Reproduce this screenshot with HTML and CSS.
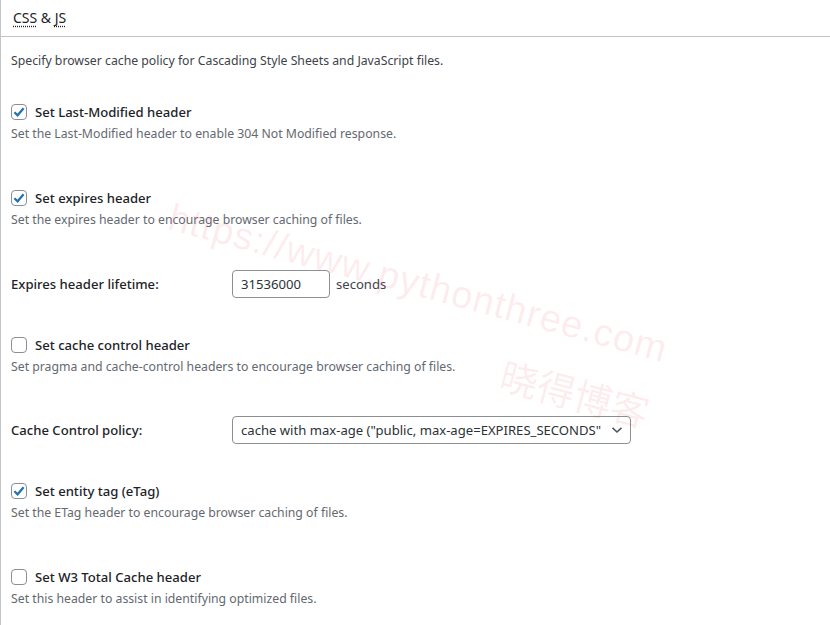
FILE: index.html
```html
<!DOCTYPE html>
<html lang="en">
<head>
  <meta charset="UTF-8">
  <title>Browser Cache - CSS &amp; JS</title>
  <link rel="stylesheet" href="styles.css">
</head>
<body>
  <div class="postbox">
    <h3 class="postbox-title"><abbr title="Cascading Style Sheet">CSS</abbr> &amp; <abbr title="JavaScript">JS</abbr></h3>
    <div class="inside">
      <p class="intro">Specify browser cache policy for Cascading Style Sheets and JavaScript files.</p>

      <div class="option first">
        <label class="check"><input type="checkbox" checked> Set Last-Modified header</label>
        <p class="desc">Set the Last-Modified header to enable 304 Not Modified response.</p>
      </div>

      <div class="option">
        <label class="check"><input type="checkbox" checked> Set expires header</label>
        <p class="desc">Set the expires header to encourage browser caching of files.</p>
      </div>

      <div class="field">
        <label class="field-label" for="lifetime">Expires header lifetime:</label>
        <input class="text" type="text" id="lifetime" value="31536000">
        <span class="unit">seconds</span>
      </div>

      <div class="option">
        <label class="check"><input type="checkbox"> Set cache control header</label>
        <p class="desc">Set pragma and cache-control headers to encourage browser caching of files.</p>
      </div>

      <div class="field second">
        <label class="field-label" for="policy">Cache Control policy:</label>
        <div class="select" id="policy">
          <span class="select-value">cache with max-age ("public, max-age=EXPIRES_SECONDS"</span>
          <svg width="12" height="8" viewBox="0 0 12 8"><path d="M1.5 1.8 L6 6 L10.5 1.8" fill="none" stroke="#50575e" stroke-width="1.6"/></svg>
        </div>
      </div>

      <div class="option">
        <label class="check"><input type="checkbox" checked> Set entity tag (eTag)</label>
        <p class="desc">Set the ETag header to encourage browser caching of files.</p>
      </div>

      <div class="option">
        <label class="check"><input type="checkbox"> Set W3 Total Cache header</label>
        <p class="desc">Set this header to assist in identifying optimized files.</p>
      </div>
    </div>

    <div class="watermark">https://www.pythonthree.com</div>
    <div class="watermark cn">晓得博客</div>
  </div>
</body>
</html>
```

FILE: styles.css
```css
body {
  margin: 0;
  background: #fff;
  font-family: "Noto Sans", sans-serif;
  color: #1d2327;
}
.postbox {
  position: relative;
  height: 625px;
  border-left: 1px solid #c3c4c7;
  overflow: hidden;
}
.postbox-title {
  margin: 0;
  padding: 8px 12px;
  font-size: 14px;
  font-weight: 400;
  line-height: 20px;
  border-bottom: 1px solid #c3c4c7;
}
abbr {
  text-decoration: underline dotted;
  text-underline-offset: 3px;
}
.inside {
  padding: 0 10px;
}
.intro {
  margin: 14px 0 0;
  font-size: 12.25px;
  line-height: 20px;
  color: #3c434a;
}
.option {
  margin-top: 44px;
}
.option.first {
  margin-top: 31px;
}
.field + .option {
  margin-top: 37px;
}
.check {
  display: flex;
  align-items: center;
  gap: 8px;
  font-size: 13.1px;
  font-weight: 500;
  line-height: 20px;
}
.check input {
  appearance: none;
  margin: 0;
  width: 16px;
  height: 16px;
  border: 1px solid #8c8f94;
  border-radius: 4px;
  background: #fff;
}
.check input:checked {
  background: #fff url("data:image/svg+xml;utf8,<svg xmlns='http://www.w3.org/2000/svg' viewBox='0 0 16 16'><path d='M3.4 8.2 L6.6 11.3 L12.6 4.2' fill='none' stroke='%232271b1' stroke-width='2.2'/></svg>") center / 16px no-repeat;
}
.desc {
  margin: 2px 0 0;
  font-size: 12.25px;
  line-height: 20px;
  color: #646970;
}
.field {
  display: flex;
  align-items: center;
  margin-top: 40px;
  font-size: 12.25px;
}
.field.second {
  margin-top: 39px;
}
.field-label {
  width: 221px;
  font-size: 13.1px;
  font-weight: 500;
}
.text {
  box-sizing: border-box;
  width: 98px;
  height: 28px;
  padding: 0 8px;
  border: 1px solid #8c8f94;
  border-radius: 4px;
  font: 13.1px "Noto Sans", sans-serif;
  color: #2c3338;
}
.unit {
  margin-left: 6px;
  font-size: 13.1px;
  color: #3c434a;
}
.select {
  box-sizing: border-box;
  display: flex;
  align-items: center;
  gap: 6px;
  width: 399px;
  height: 28px;
  padding: 0 7px 0 8px;
  border: 1px solid #8c8f94;
  border-radius: 4px;
  font-size: 13.1px;
  color: #2c3338;
}
.select-value {
  flex: 1;
  min-width: 0;
  white-space: nowrap;
  overflow: hidden;
}
.watermark {
  position: absolute;
  left: 174px;
  top: 196px;
  font-family: "Liberation Sans", sans-serif;
  font-size: 38px;
  letter-spacing: 1px;
  color: rgba(240, 60, 80, 0.1);
  transform: rotate(15deg);
  transform-origin: left top;
  white-space: nowrap;
  pointer-events: none;
}
.watermark.cn {
  left: 508px;
  top: 346px;
  font-family: "Noto Sans CJK SC", sans-serif;
  font-size: 38px;
  letter-spacing: 0;
}
```
